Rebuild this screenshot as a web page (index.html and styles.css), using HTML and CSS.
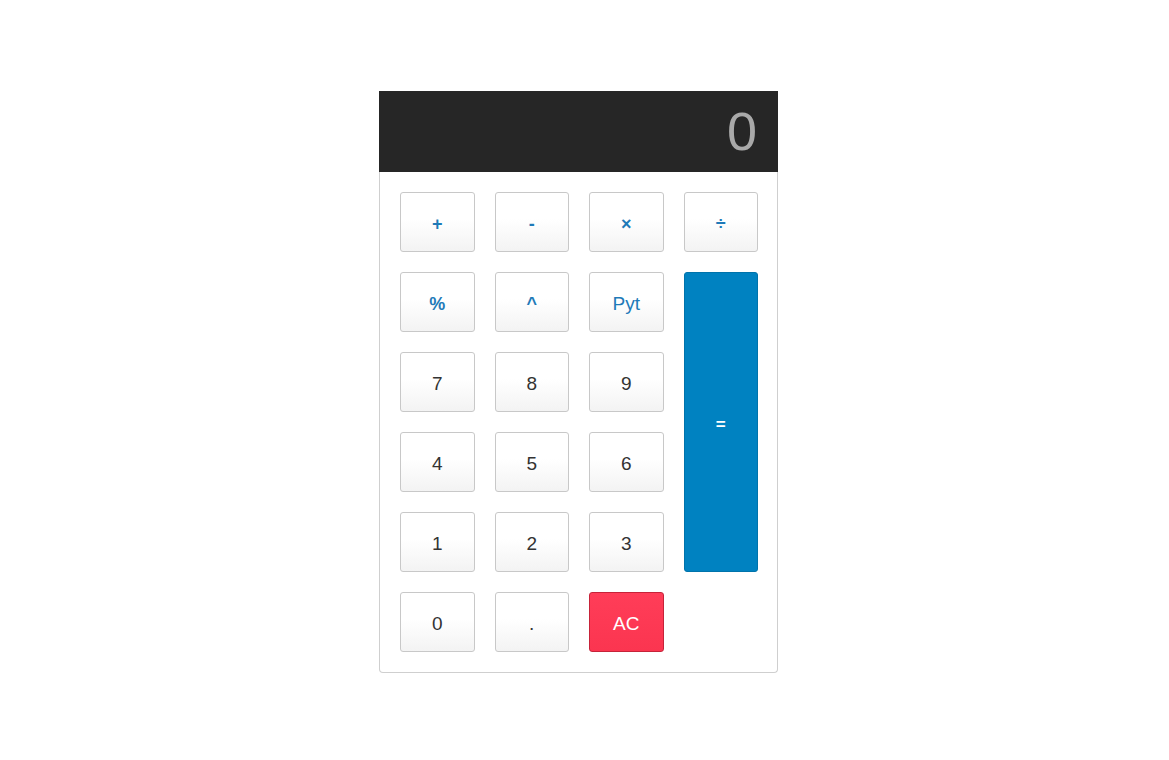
FILE: index.html
```html
<!DOCTYPE html>
<html>
<head>
<meta charset="utf-8">
<link rel="stylesheet" href="styles.css">
</head>
<body>
<div class="calc">
  <div class="display">0</div>
  <div class="keys">
    <button class="key op bold">+</button>
    <button class="key op bold">-</button>
    <button class="key op bold">×</button>
    <button class="key op bold">÷</button>
    <button class="key op bold">%</button>
    <button class="key op bold">^</button>
    <button class="key op">Pyt</button>
    <button class="key equals">=</button>
    <button class="key">7</button>
    <button class="key">8</button>
    <button class="key">9</button>
    <button class="key">4</button>
    <button class="key">5</button>
    <button class="key">6</button>
    <button class="key">1</button>
    <button class="key">2</button>
    <button class="key">3</button>
    <button class="key">0</button>
    <button class="key">.</button>
    <button class="key clear">AC</button>
  </div>
</div>
</body>
</html>
```
FILE: styles.css
```css
html, body {
  margin: 0;
  padding: 0;
  background: #fff;
  font-family: "Liberation Sans", Arial, sans-serif;
}
body {
  padding: 91px 0 0 379px;
}
.calc {
  width: 399px;
  box-sizing: border-box;
  border: 1px solid #cfcfcf;
  border-top: none;
  border-radius: 0 0 4px 4px;
  background: #fff;
}
.display {
  height: 81px;
  margin: 0 -1px;
  background: #262626;
  color: #a9a9a9;
  font-size: 54px;
  line-height: 81px;
  text-align: right;
  padding-right: 21px;
  box-sizing: border-box;
  font-weight: 300;
}
.keys {
  display: grid;
  grid-template-columns: repeat(4, 1fr);
  grid-auto-rows: 60px;
  gap: 20px;
  padding: 20px 19px 20px 20px;
}
.key {
  font-family: "Liberation Sans", Arial, sans-serif;
  font-size: 19px;
  color: #333;
  border: 1px solid #c8c8c8;
  border-radius: 3px;
  background: linear-gradient(to bottom, #ffffff 0%, #ffffff 45%, #f3f3f3 100%);
  padding: 4px 0 0;
  margin: 0;
}
.op {
  color: #1f7ab8;
}
.bold {
  font-weight: bold;
  font-size: 18px;
}
.equals {
  grid-column: 4;
  grid-row: 2 / span 4;
  background: #0082c1;
  border-color: #0073ab;
  color: #fff;
  font-weight: bold;
  font-size: 17px;
  padding-top: 6px;
}
.clear {
  background: linear-gradient(to bottom, #ff3d58 0%, #fb3550 100%);
  border-color: #c62339;
  color: #fff;
}
```
